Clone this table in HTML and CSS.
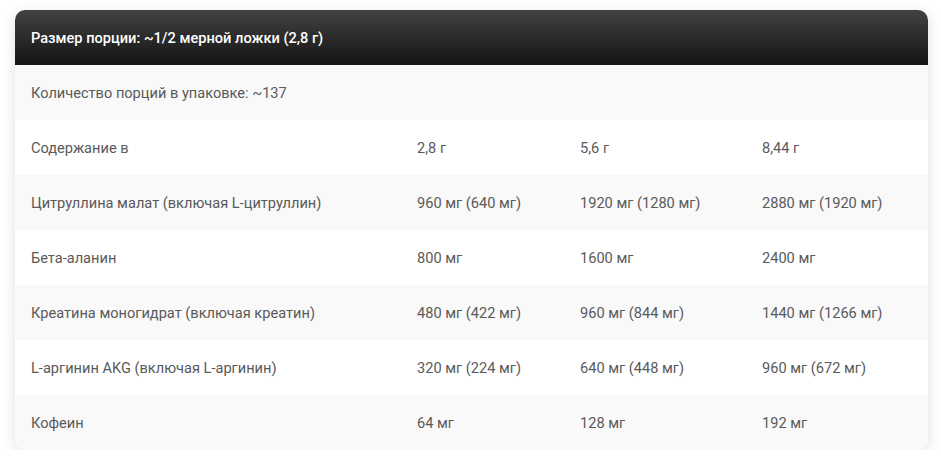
FILE: index.html
```html
<!DOCTYPE html>
<html lang="ru">
<head>
<meta charset="utf-8">
<link rel="stylesheet" href="styles.css">
</head>
<body>
<div class="card">
  <div class="head">Размер порции: ~1/2 мерной ложки (2,8 г)</div>
  <div class="row alt"><div class="cell full">Количество порций в упаковке: ~137</div></div>
  <div class="row"><div class="cell">Содержание в</div><div class="cell">2,8 г</div><div class="cell">5,6 г</div><div class="cell">8,44 г</div></div>
  <div class="row alt"><div class="cell">Цитруллина малат (включая L-цитруллин)</div><div class="cell">960 мг (640 мг)</div><div class="cell">1920 мг (1280 мг)</div><div class="cell">2880 мг (1920 мг)</div></div>
  <div class="row"><div class="cell">Бета-аланин</div><div class="cell">800 мг</div><div class="cell">1600 мг</div><div class="cell">2400 мг</div></div>
  <div class="row alt"><div class="cell">Креатина моногидрат (включая креатин)</div><div class="cell">480 мг (422 мг)</div><div class="cell">960 мг (844 мг)</div><div class="cell">1440 мг (1266 мг)</div></div>
  <div class="row"><div class="cell">L-аргинин AKG (включая L-аргинин)</div><div class="cell">320 мг (224 мг)</div><div class="cell">640 мг (448 мг)</div><div class="cell">960 мг (672 мг)</div></div>
  <div class="row alt"><div class="cell">Кофеин</div><div class="cell">64 мг</div><div class="cell">128 мг</div><div class="cell">192 мг</div></div>
</div>
</body>
</html>
```
FILE: styles.css
```css
html, body {
  margin: 0;
  background: #ffffff;
}
body {
  padding: 10px 13px 0 15px;
  font-family: Roboto, "Liberation Sans", sans-serif;
  font-size: 14.6px;
}
.card {
  width: 913px;
  border-radius: 10px;
  overflow: hidden;
  box-shadow: 0 3px 14px rgba(0, 0, 0, 0.13);
  background: #fff;
}
.head {
  height: 55px;
  display: flex;
  align-items: center;
  padding: 0 16px;
  color: #ffffff;
  font-weight: 500;
  background: linear-gradient(to bottom, #424242, #141414);
}
.row {
  height: 55px;
  display: grid;
  grid-template-columns: 386px 163px 182px 182px;
  background: #ffffff;
  color: #5a5a5a;
}
.row.alt {
  background: #f9f9f9;
}
.cell {
  display: flex;
  align-items: center;
  padding: 0 16px;
}
.cell.full {
  grid-column: 1 / -1;
}
```
